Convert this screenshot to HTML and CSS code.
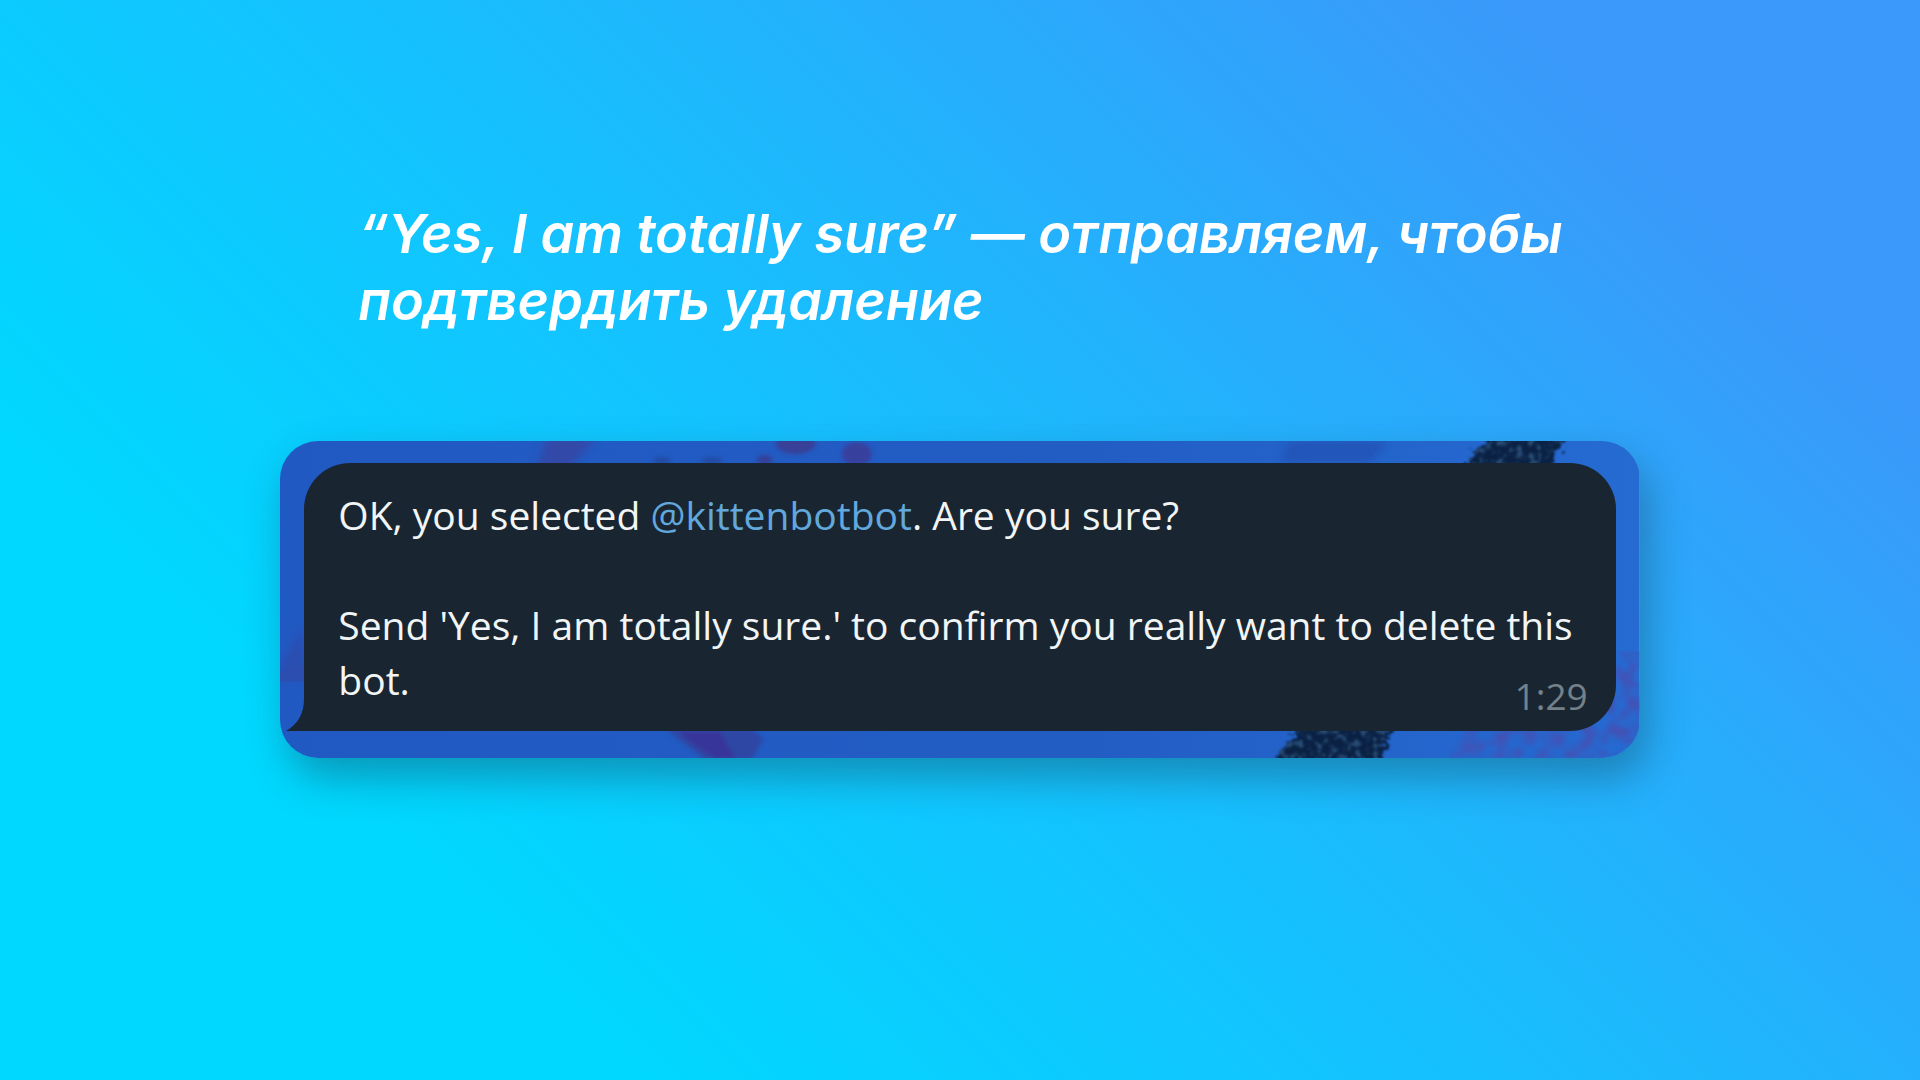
FILE: index.html
```html
<!DOCTYPE html>
<html lang="ru">
<head>
<meta charset="utf-8">
<meta name="viewport" content="width=device-width, initial-scale=1">
<title>Удаление бота</title>
<link rel="stylesheet" href="styles.css">
</head>
<body>
<main class="slide">
  <h1 class="title">“Yes, I am totally sure” — отправляем, чтобы подтвердить удаление</h1>
  <section class="chat">
    <svg class="wallpaper" viewBox="0 0 1360 317" preserveAspectRatio="none" aria-hidden="true">
      <defs>
        <linearGradient id="base" x1="0" x2="1">
          <stop offset="0" stop-color="#2159c2"/>
          <stop offset="0.6" stop-color="#225dc4"/>
          <stop offset="1" stop-color="#256bd2"/>
        </linearGradient>
        <filter id="soft" x="-20%" y="-20%" width="140%" height="140%"><feGaussianBlur stdDeviation="4"/></filter>
        <filter id="smudge" x="-20%" y="-20%" width="140%" height="140%"><feGaussianBlur stdDeviation="2"/></filter>
        <filter id="rough" x="-10%" y="-10%" width="120%" height="120%" color-interpolation-filters="sRGB">
          <feTurbulence type="fractalNoise" baseFrequency="0.16" numOctaves="2" seed="4" result="noise"/>
          <feDisplacementMap in="SourceGraphic" in2="noise" scale="24" xChannelSelector="R" yChannelSelector="G" result="edge"/>
          <feColorMatrix in="noise" type="matrix" values="0 0 0 0 0.16  0 0 0 0 0.3  0 0 0 0 0.46  5 0 0 0 -2.5" result="specks"/>
          <feComposite in="specks" in2="edge" operator="in" result="grain"/>
          <feMerge result="all"><feMergeNode in="edge"/><feMergeNode in="grain"/></feMerge>
          <feGaussianBlur in="all" stdDeviation="1"/>
        </filter>
        <filter id="speckle" x="0" y="0" width="100%" height="100%" color-interpolation-filters="sRGB">
          <feTurbulence type="fractalNoise" baseFrequency="0.07" numOctaves="3" seed="9"/>
          <feColorMatrix type="matrix" values="0 0 0 0 0.26  0 0 0 0 0.32  0 0 0 0 0.71  3 0 0 0 -1.1" result="spots"/>
          <feComposite in="spots" in2="SourceGraphic" operator="in"/>
          <feGaussianBlur stdDeviation="2"/>
        </filter>
      </defs>
      <rect width="1360" height="317" fill="url(#base)"/>
      <g filter="url(#soft)">
        <path d="M268 -6H318L288 30H256Z" fill="#304aa8"/>
        <path d="M24 185V239H0V225Z" fill="#2b4eb0"/>
        <path d="M1010 0H1110L1090 22H1000Z" fill="#2355b8"/>
      </g>
      <path d="M0 240H24V225L0 230Z" fill="#2b4eb0"/>
      <g filter="url(#smudge)">
        <ellipse cx="516" cy="3" rx="20" ry="10" fill="#393f98"/>
        <ellipse cx="577" cy="13" rx="15" ry="12" fill="#393f9e"/>
        <ellipse cx="485" cy="19" rx="8" ry="5" fill="#343f9a"/>
        <ellipse cx="432" cy="20" rx="11" ry="4" fill="#224ba5"/>
        <ellipse cx="382" cy="20" rx="9" ry="4" fill="#224ba5"/>
        <path d="M387 288C398 300 412 307 425 319H472L484 298L472 288Z" fill="#2f46a5"/>
        <path d="M400 290C410 304 425 310 436 318H456L440 290Z" fill="#38369a"/>
      </g>
      <g filter="url(#rough)" fill="#0a2144">
        <path d="M1210 -8H1290L1266 30H1182Z"/>
        <path d="M1022 280H1114L1098 330H990Z"/>
      </g>
      <path d="M1186 290L1335 250V210H1360V317H1170Z" fill="#4351b4" filter="url(#speckle)"/>
    </svg>
    <article class="bubble">
      <svg class="tail" viewBox="0 0 20 32" aria-hidden="true"><path d="M20 0H18C18 15 11 26 0 32H20Z" fill="#192632"/></svg>
      <p class="text">OK, you selected <a class="mention" href="#kittenbotbot">@kittenbotbot</a>. Are you sure?</p>
      <p class="text">Send 'Yes, I am totally sure.' to confirm you really want to delete this bot.</p>
      <time class="time" datetime="01:29">1:29</time>
    </article>
  </section>
</main>
</body>
</html>
```
FILE: styles.css
```css
* {
  box-sizing: border-box;
}

body {
  margin: 0;
  font-family: "Open Sans", "Noto Sans", sans-serif;
}

.slide {
  min-height: 100vh;
  padding: 200px 14.6% 80px;
  background: linear-gradient(45deg, #00d8ff 21%, #17bffe 50%, #28acfc 68%, #3a99fa 86%);
}

.title {
  margin: 0 60px 107px 78px;
  color: #fff;
  font: italic 600 54px/67px Inter, sans-serif;
}

.chat {
  position: relative;
  padding: 22px 24px 27px;
  border-radius: 38px;
  box-shadow: 8px 20px 40px rgba(20, 60, 80, 0.4);
}

.wallpaper {
  position: absolute;
  inset: 0;
  width: 100%;
  height: 100%;
  border-radius: 38px;
}

.bubble {
  position: relative;
  display: flex;
  flex-direction: column;
  gap: 55px;
  padding: 24px 34px;
  border-radius: 46px 46px 46px 0;
  background: #192632;
  color: #f2f5f5;
}

.tail {
  position: absolute;
  left: -18px;
  bottom: 0;
  width: 20px;
  height: 32px;
}

.text {
  margin: 0;
  font-size: 39px;
  line-height: 55px;
}

.mention {
  color: #62a8dc;
  text-decoration: none;
}

.time {
  position: absolute;
  right: 28px;
  bottom: 8px;
  color: #74818a;
  font-size: 37px;
  line-height: 55px;
}
```
